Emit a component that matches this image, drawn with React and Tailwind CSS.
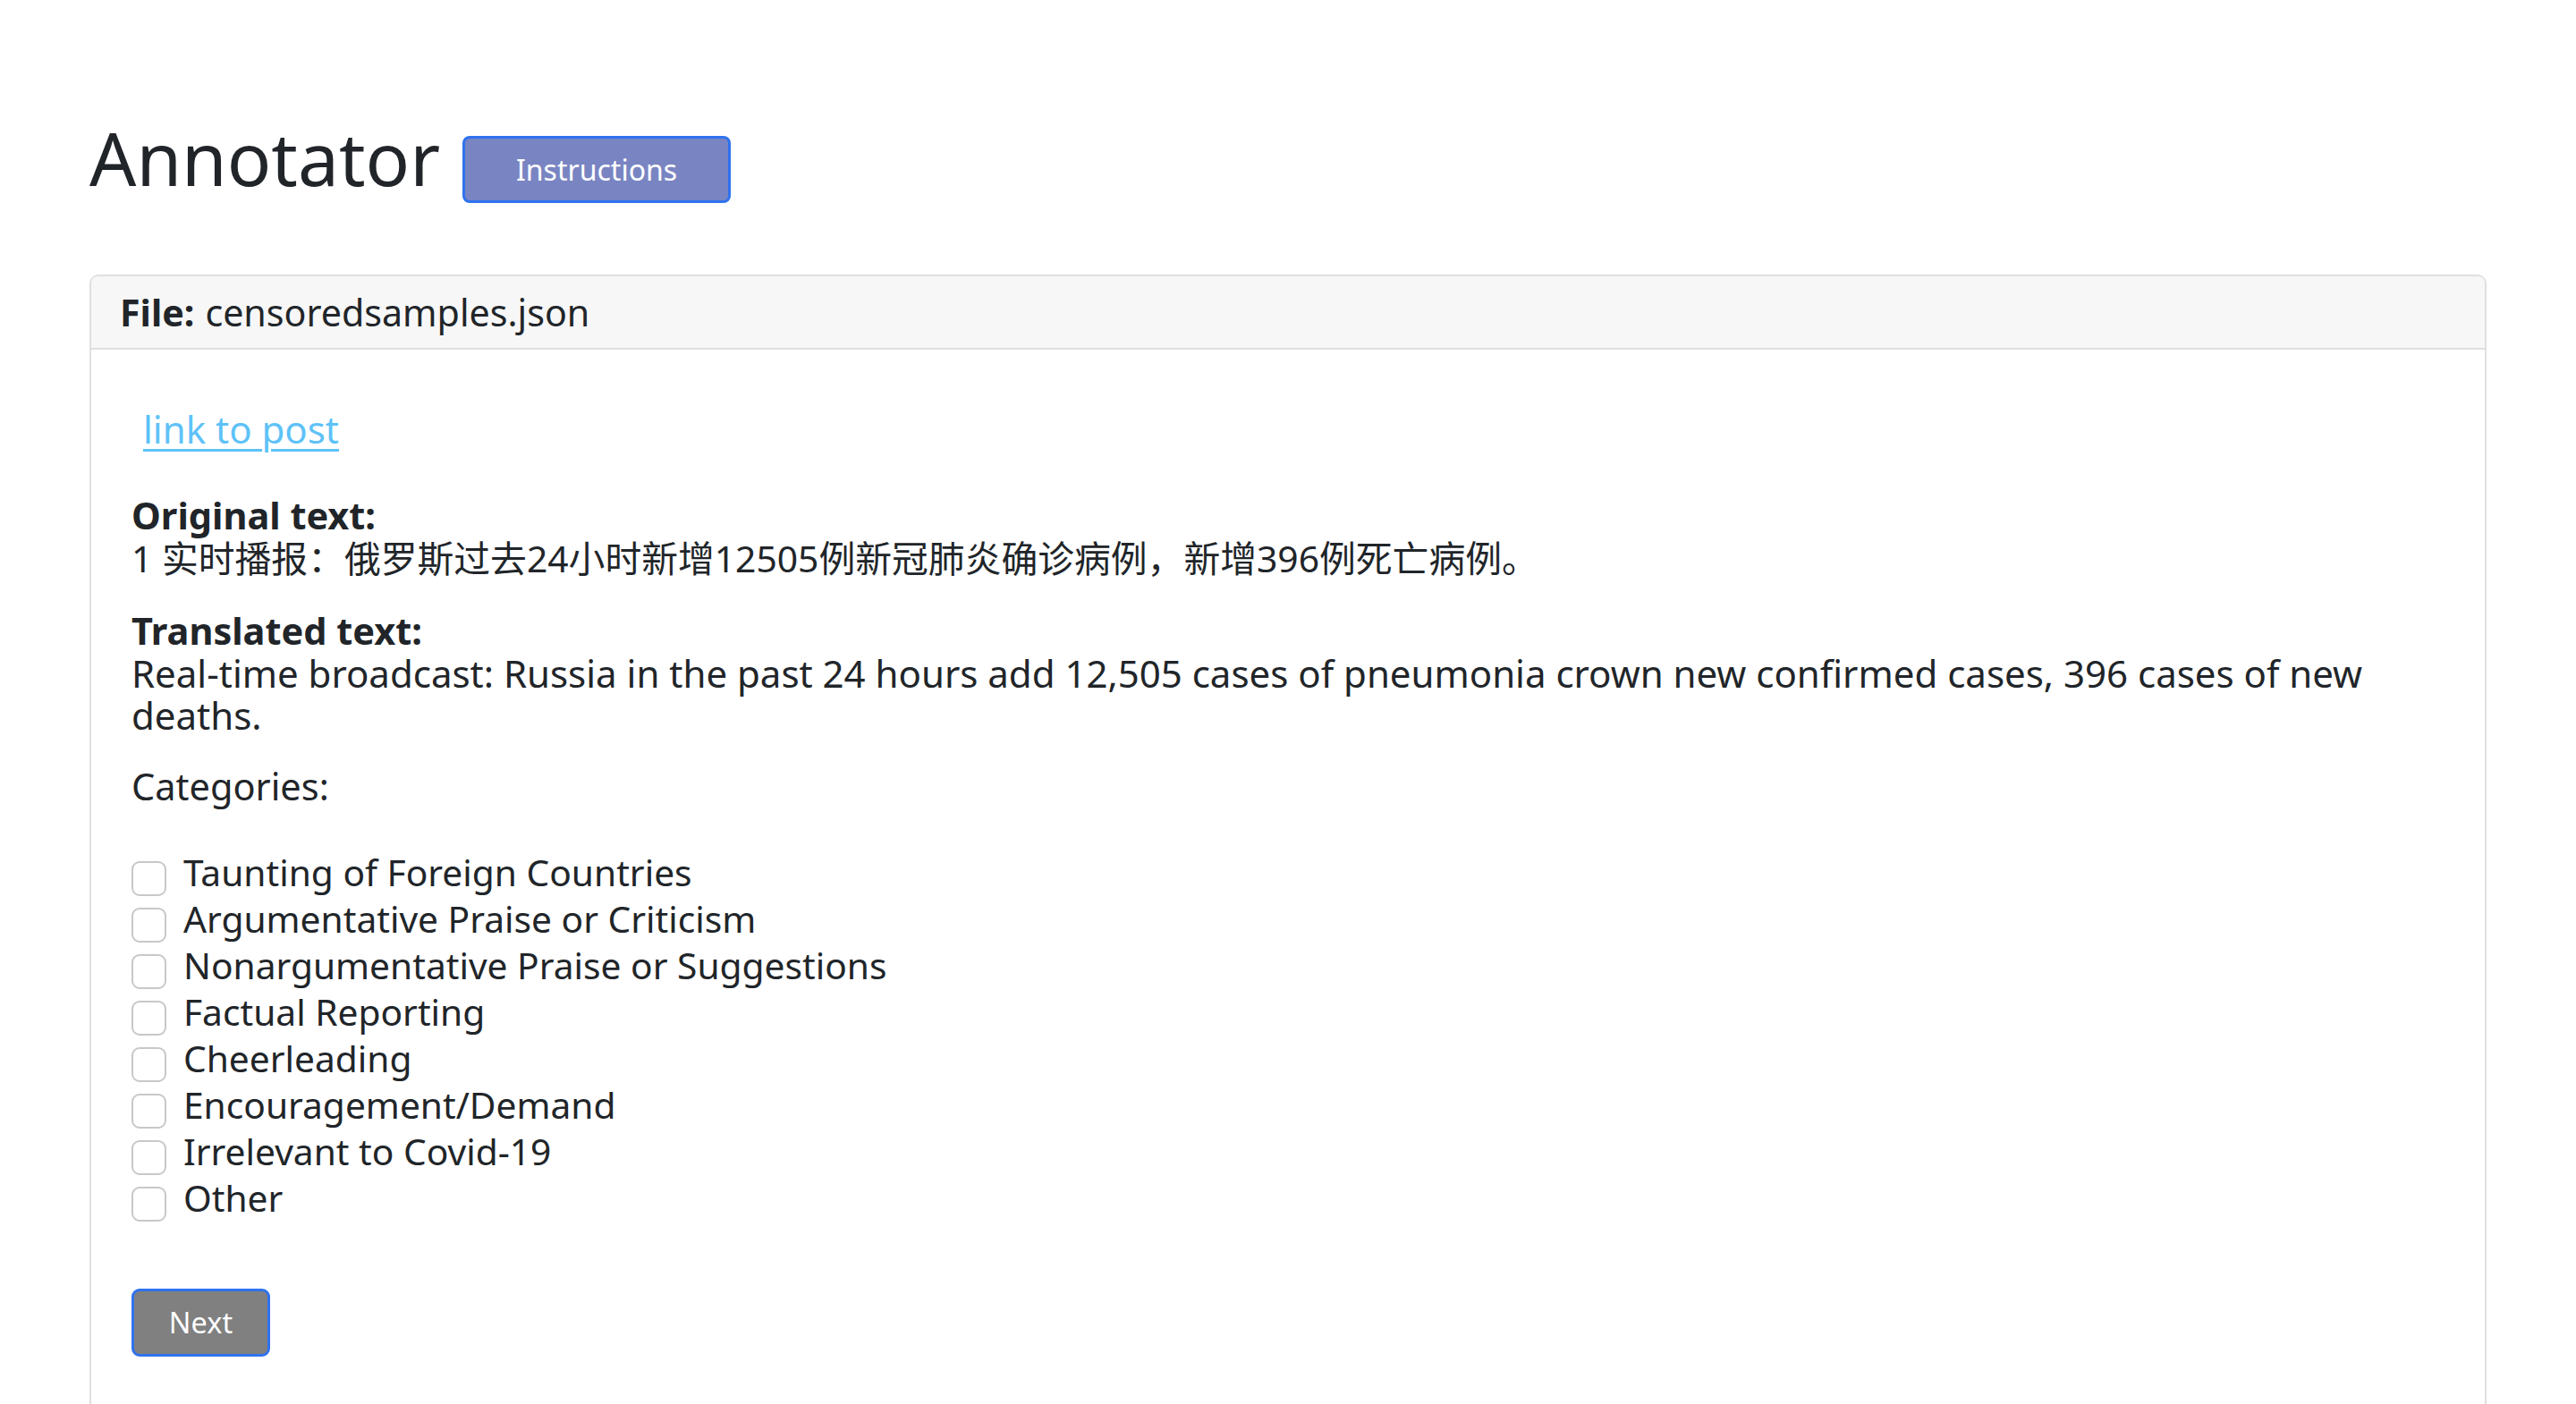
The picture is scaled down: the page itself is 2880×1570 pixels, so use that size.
import React, { useState } from "react";

const categories = [
  "Taunting of Foreign Countries",
  "Argumentative Praise or Criticism",
  "Nonargumentative Praise or Suggestions",
  "Factual Reporting",
  "Cheerleading",
  "Encouragement/Demand",
  "Irrelevant to Covid-19",
  "Other",
];

export default function App() {
  const [checked, setChecked] = useState({});

  const toggle = (name) => setChecked((prev) => ({ ...prev, [name]: !prev[name] }));

  return (
    <div className="min-h-screen bg-white text-[#212529] font-['Noto_Sans','Noto_Sans_CJK_SC',sans-serif] px-[100px] pt-[127px]">
      {/* Title row */}
      <div className="flex items-start">
        <h1 className="text-[82px] leading-[98px] font-normal">Annotator</h1>
        <button className="ml-[25px] mt-[25px] w-[300px] h-[75px] rounded-[8px] border-[3px] border-[#2f72ee] bg-[#7985c2] text-white text-[32px] leading-none">
          Instructions
        </button>
      </div>

      {/* Card */}
      <div className="mt-[80px] border-2 border-[#dfdfdf] rounded-[10px] overflow-hidden">
        <div className="h-[82px] flex items-center px-[32px] bg-[#f7f7f7] border-b-2 border-[#dfdfdf] text-[41.2px] leading-[48px]">
          <span className="font-bold">File:</span>
          <span className="ml-[12px]">censoredsamples.json</span>
        </div>

        <div className="px-[45px] pt-[65px] pb-[90px] text-[41.5px] leading-[48px]">
          <a href="#" className="block ml-[13px] text-[42px] leading-[48px] text-[#5ec2f8] underline underline-offset-[6px] decoration-[3px]">
            link to post
          </a>

          <div className="mt-[48px]">
            <div className="font-bold">Original text:</div>
            <div className="text-[40.8px]">1 实时播报：俄罗斯过去24小时新增12505例新冠肺炎确诊病例，新增396例死亡病例。</div>
          </div>

          <div className="mt-[33px]">
            <div className="font-bold">Translated text:</div>
            <div className="text-[42px] leading-[47px]">
              Real-time broadcast: Russia in the past 24 hours add 12,505 cases of pneumonia crown new confirmed cases, 396 cases of new deaths.
            </div>
          </div>

          <div className="mt-[32px]">Categories:</div>

          <div className="mt-[46px] flex flex-col text-[40.7px]">
            {categories.map((c) => (
              <label key={c} className="h-[52px] flex items-start cursor-pointer" onClick={() => toggle(c)}>
                <span
                  className={`mt-[14px] w-[39px] h-[39px] shrink-0 rounded-[9px] border-2 ${
                    checked[c] ? "bg-[#2f72ee] border-[#2f72ee]" : "bg-white border-[#c8c8c8]"
                  }`}
                />
                <span className="ml-[19px] leading-[52px]">{c}</span>
              </label>
            ))}
          </div>

          <button className="mt-[76px] w-[155px] h-[76px] rounded-[9px] border-[3px] border-[#2f72ee] bg-[#808080] text-white text-[32.5px] leading-none">
            Next
          </button>
        </div>
      </div>
    </div>
  );
}
